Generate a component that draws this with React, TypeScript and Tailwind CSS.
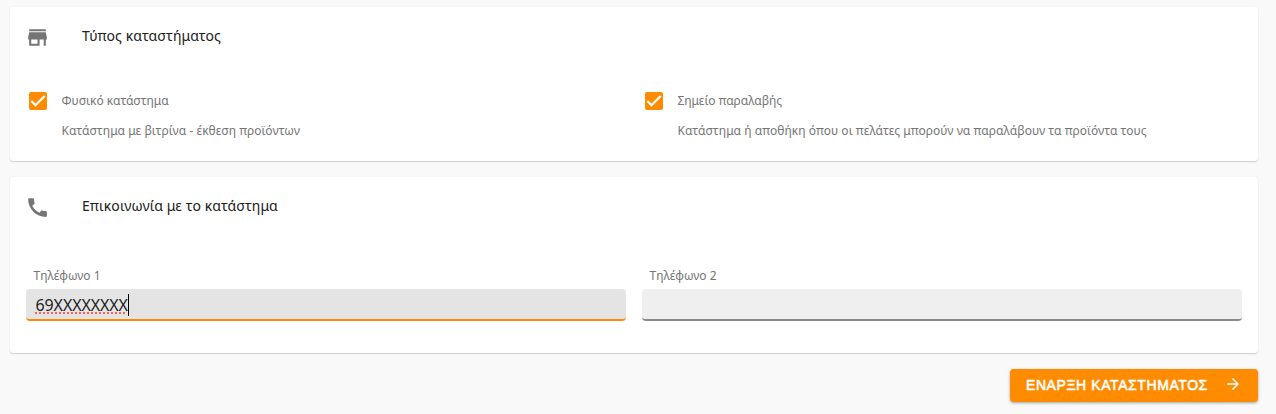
import { useState, type ReactNode } from "react";
import { MdArrowForward, MdCall, MdStore } from "react-icons/md";

interface SectionProps {
  icon: ReactNode;
  title: string;
  className: string;
  children: ReactNode;
}

function Section({ icon, title, className, children }: SectionProps) {
  return (
    <section
      className={`rounded-[3px] bg-white px-4 pt-[18px] shadow-[0_1px_1px_rgba(0,0,0,0.17),0_0_2px_rgba(0,0,0,0.06)] ${className}`}
    >
      <header className="-ml-px flex h-6 items-center gap-8 text-[#757575]">
        {icon}
        <h2 className="-mt-0.5 text-sm leading-6 tracking-[0.08px] text-[#212121]">{title}</h2>
      </header>
      {children}
    </section>
  );
}

interface StoreTypeProps {
  label: string;
  description: string;
}

function StoreType({ label, description }: StoreTypeProps) {
  const [checked, setChecked] = useState(true);

  return (
    <div className="pl-[3px] text-xs text-[#757575]">
      <label className="flex h-[18px] items-center gap-[14.5px]">
        <input
          type="checkbox"
          className="sr-only"
          checked={checked}
          onChange={(event) => setChecked(event.target.checked)}
        />
        <span
          className={`flex size-[18px] items-center justify-center rounded-xs ${
            checked ? "bg-[#ff8c00]" : "border-2 border-[#757575]"
          }`}
        >
          {checked && (
            <svg viewBox="0 0 24 24" className="size-4">
              <path d="M2 12 8.3 18.3 22 4.6" fill="none" stroke="#fff" strokeWidth="3.4" />
            </svg>
          )}
        </span>
        <span className="tracking-[-0.03px]">{label}</span>
      </label>
      <p className="mt-3 pl-[32.5px] leading-[18px] tracking-[0.045px]">{description}</p>
    </div>
  );
}

interface PhoneFieldProps {
  label: string;
  value: string;
  focused?: boolean;
}

function PhoneField({ label, value, focused = false }: PhoneFieldProps) {
  return (
    <div>
      <p className="pl-[7.5px] text-xs leading-[18px] text-[#757575]">{label}</p>
      <div
        className={`mt-1 flex h-8 items-center rounded-[4px] border-b-2 pt-px pl-[9.5px] text-base text-[#212121] ${
          focused ? "border-[#ff8c00] bg-[#e4e4e4]" : "border-[#8a8a8a] bg-[#efefef]"
        }`}
      >
        {value && (
          <span className="tracking-[-0.1px] underline decoration-[#ff5c5c] decoration-dotted decoration-2 underline-offset-2 [text-decoration-skip-ink:none]">
            {value}
          </span>
        )}
        {focused && <span className="h-[22px] w-px bg-black" />}
      </div>
    </div>
  );
}

export default function App() {
  return (
    <main className="h-[414px] bg-[#f9f9f9] pt-[7px] pr-[18px] pl-[10px] font-['Noto_Sans',sans-serif]">
      <Section icon={<MdStore size={25} />} title="Τύπος καταστήματος" className="h-[154px]">
        <div className="mt-[43px] grid grid-cols-2 gap-4">
          <StoreType label="Φυσικό κατάστημα" description="Κατάστημα με βιτρίνα - έκθεση προϊόντων" />
          <StoreType
            label="Σημείο παραλαβής"
            description="Κατάστημα ή αποθήκη όπου οι πελάτες μπορούν να παραλάβουν τα προϊόντα τους"
          />
        </div>
      </Section>

      <Section icon={<MdCall size={25} />} title="Επικοινωνία με το κατάστημα" className="mt-4 h-[176px]">
        <div className="mt-12 grid grid-cols-2 gap-4">
          <PhoneField label="Τηλέφωνο 1" value="69XXXXXXXX" focused />
          <PhoneField label="Τηλέφωνο 2" value="" />
        </div>
      </Section>

      <div className="mt-4 flex justify-end">
        <button
          type="button"
          className="flex h-[33px] w-[248px] items-center justify-between rounded-[4px] bg-[#ff8c00] px-4 pb-[2px] font-['Liberation_Sans',sans-serif] text-sm tracking-[0.58px] text-white shadow-[0_1px_3px_rgba(0,0,0,0.35)] [-webkit-text-stroke:0.55px_white]"
        >
          ΕΝΑΡΞΗ ΚΑΤΑΣΤΗΜΑΤΟΣ
          <MdArrowForward size={18} className="-mt-px" />
        </button>
      </div>
    </main>
  );
}
